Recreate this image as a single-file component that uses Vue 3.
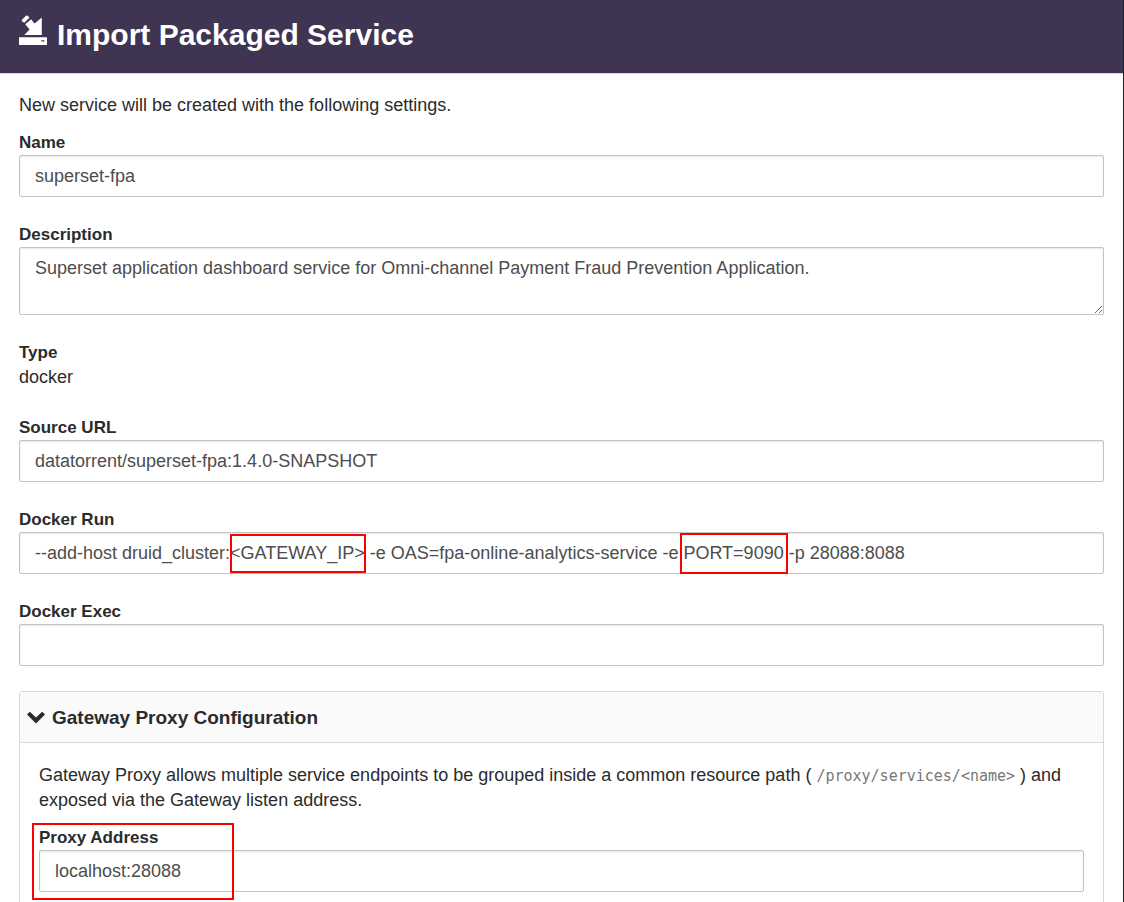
<script setup>
import { ref } from 'vue'

const name = ref('superset-fpa')
const description = ref('Superset application dashboard service for Omni-channel Payment Fraud Prevention Application.')
const sourceUrl = ref('datatorrent/superset-fpa:1.4.0-SNAPSHOT')
const dockerRun = ref('--add-host druid_cluster:<GATEWAY_IP> -e OAS=fpa-online-analytics-service -e PORT=9090 -p 28088:8088')
const dockerExec = ref('')
const proxyAddress = ref('localhost:28088')
const open = ref(true)
</script>

<template>
  <div class="page">
    <header class="header">
      <svg class="header-icon" viewBox="0 0 28 30" aria-hidden="true">
        <path d="M0 22.300H28V30H0ZM22.300 25.200V26.400H25.400V25.200Z" fill-rule="evenodd" />
        <path d="M22.800 2.500V20H5.200L10.600 14.600L6.400 9.400Q7 7.800 8.400 7.400L12 4.200L15.600 8.600Z" />
        <path d="M2.900 6.200Q2.500 5.400 3.200 4.600L7 .8Q7.800 .1 8.600 .7L10.500 2.600L5.300 7.800Z" />
      </svg>
      <h1>Import Packaged Service</h1>
    </header>

    <main class="content">
      <p class="intro">New service will be created with the following settings.</p>

      <div class="field">
        <label for="name">Name</label>
        <input id="name" v-model="name" type="text" />
      </div>

      <div class="field">
        <label for="description">Description</label>
        <textarea id="description" v-model="description" rows="2"></textarea>
      </div>

      <div class="field">
        <strong>Type</strong>
        <span>docker</span>
      </div>

      <div class="field">
        <label for="source">Source URL</label>
        <input id="source" v-model="sourceUrl" type="text" />
      </div>

      <div class="field">
        <label for="run">Docker Run</label>
        <input id="run" v-model="dockerRun" type="text" />
        <span class="mark mark-ip"></span>
        <span class="mark mark-port"></span>
      </div>

      <div class="field">
        <label for="exec">Docker Exec</label>
        <input id="exec" v-model="dockerExec" type="text" />
      </div>

      <section class="panel">
        <h2>
          <button type="button" class="toggle" :aria-expanded="open" @click="open = !open">
            <svg class="chevron" viewBox="0 0 20 14" aria-hidden="true">
              <path d="M3.800 .8L10 6.600L16.200 .8L19 3.500L10 12.600L1 3.500Z" />
            </svg>
            <span>Gateway Proxy Configuration</span>
          </button>
        </h2>
        <div v-if="open" class="panel-body">
          <p>
            Gateway Proxy allows multiple service endpoints to be grouped inside a common resource path (
            <code>/proxy/services/&lt;name&gt;</code> ) and exposed via the Gateway listen address.
          </p>
          <div class="field">
            <label for="proxy">Proxy Address</label>
            <input id="proxy" v-model="proxyAddress" type="text" />
            <span class="mark mark-proxy"></span>
          </div>
        </div>
      </section>
    </main>
  </div>
</template>

<style>
body {
  margin: 0;
  background: #fff;
}
</style>

<style scoped>
.page {
  box-sizing: border-box;
  min-height: 100vh;
  border-right: 1px solid #1f1f22;
  color: #2b2b2b;
  font: 18px/25px "Liberation Sans", Arial, sans-serif;
}

.header {
  display: flex;
  align-items: flex-start;
  gap: 10px;
  padding: 15px 19px 19px;
  background: #3f3553;
  border-bottom: 1px solid #d9d7dd;
  color: #fff;
}

.header-icon {
  width: 28px;
  height: 30px;
  fill: #fff;
}

h1 {
  margin: 0;
  font-size: 30px;
  line-height: 39px;
}

.content {
  padding: 19px 19px 25px;
}

p {
  margin: 0 0 12px;
}

.field {
  position: relative;
  display: flex;
  flex-direction: column;
  margin-bottom: 25px;
}

label,
strong {
  font-size: 17px;
  font-weight: bold;
}

input,
textarea {
  box-sizing: border-box;
  width: 100%;
  margin: 0;
  padding: 8px 15px;
  border: 1px solid #c4c4c4;
  border-radius: 2px;
  background: #fff;
  box-shadow: inset 0 1px 2px rgba(0, 0, 0, 0.1);
  color: #4d4d4d;
  font: inherit;
}

input {
  height: 42px;
}

textarea {
  height: 68px;
  resize: vertical;
}

.panel {
  border: 1px solid #d8d8d8;
  border-radius: 3px;
}

h2 {
  margin: 0;
  border-bottom: 1px solid #d8d8d8;
  background: #fafafa;
}

.toggle {
  display: flex;
  align-items: center;
  gap: 6px;
  width: 100%;
  padding: 13px 6px 12px;
  border: 0;
  background: none;
  color: inherit;
  font: bold 19px/25px "Liberation Sans", Arial, sans-serif;
  text-align: left;
}

.chevron {
  width: 20px;
  height: 14px;
  fill: #2b2b2b;
}

.panel-body {
  padding: 20px 19px;
}

.panel-body .field {
  margin-bottom: 0;
}

code {
  color: #777;
  font-family: "DejaVu Sans Mono", monospace;
  font-size: 15px;
  line-height: 1;
}

.mark {
  position: absolute;
  box-sizing: border-box;
  border: 2px solid #f00;
  pointer-events: none;
}

.mark-ip {
  top: 27px;
  left: 211px;
  width: 136px;
  height: 39px;
}

.mark-port {
  top: 26px;
  left: 661px;
  width: 108px;
  height: 41px;
}

.mark-proxy {
  top: -2px;
  left: -7px;
  width: 202px;
  height: 77px;
}
</style>
